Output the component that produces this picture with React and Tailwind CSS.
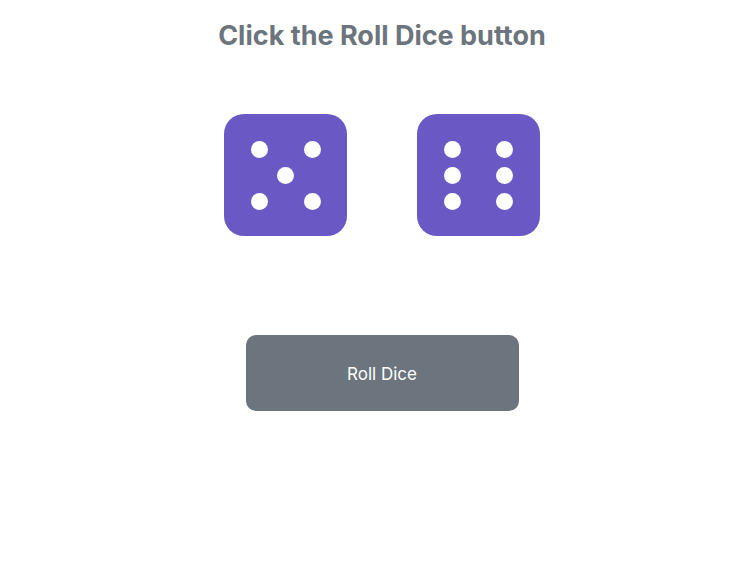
import React from "react";

const Dot = () => <div className="w-[17px] h-[17px] rounded-full bg-white" />;

function Five() {
  return (
    <div className="w-[123px] h-[122px] rounded-[20px] bg-[#6a59c4] relative">
      <div className="absolute left-[27px] top-[27px]"><Dot /></div>
      <div className="absolute left-[80px] top-[27px]"><Dot /></div>
      <div className="absolute left-[53px] top-[53px]"><Dot /></div>
      <div className="absolute left-[27px] top-[79px]"><Dot /></div>
      <div className="absolute left-[80px] top-[79px]"><Dot /></div>
    </div>
  );
}

function Six() {
  return (
    <div className="w-[123px] h-[122px] rounded-[20px] bg-[#6a59c4] flex justify-between px-[27px] pt-[27px] pb-[26px]">
      <div className="flex flex-col justify-between"><Dot /><Dot /><Dot /></div>
      <div className="flex flex-col justify-between"><Dot /><Dot /><Dot /></div>
    </div>
  );
}

export default function App() {
  return (
    <div className="w-[744px] h-[563px] bg-white flex flex-col items-center pl-[20px]" style={{ fontFamily: "Inter, 'Noto Sans', sans-serif" }}>
      <h1 className="mt-[19px] text-[27px] leading-[34px] font-bold text-[#6c757d]">Click the Roll Dice button</h1>
      <div className="mt-[61px] flex gap-[70px]">
        <Five />
        <Six />
      </div>
      <button className="mt-[99px] w-[273px] h-[76px] rounded-[10px] bg-[#6c757d] text-white text-[17px] pt-[4px]">Roll Dice</button>
    </div>
  );
}
